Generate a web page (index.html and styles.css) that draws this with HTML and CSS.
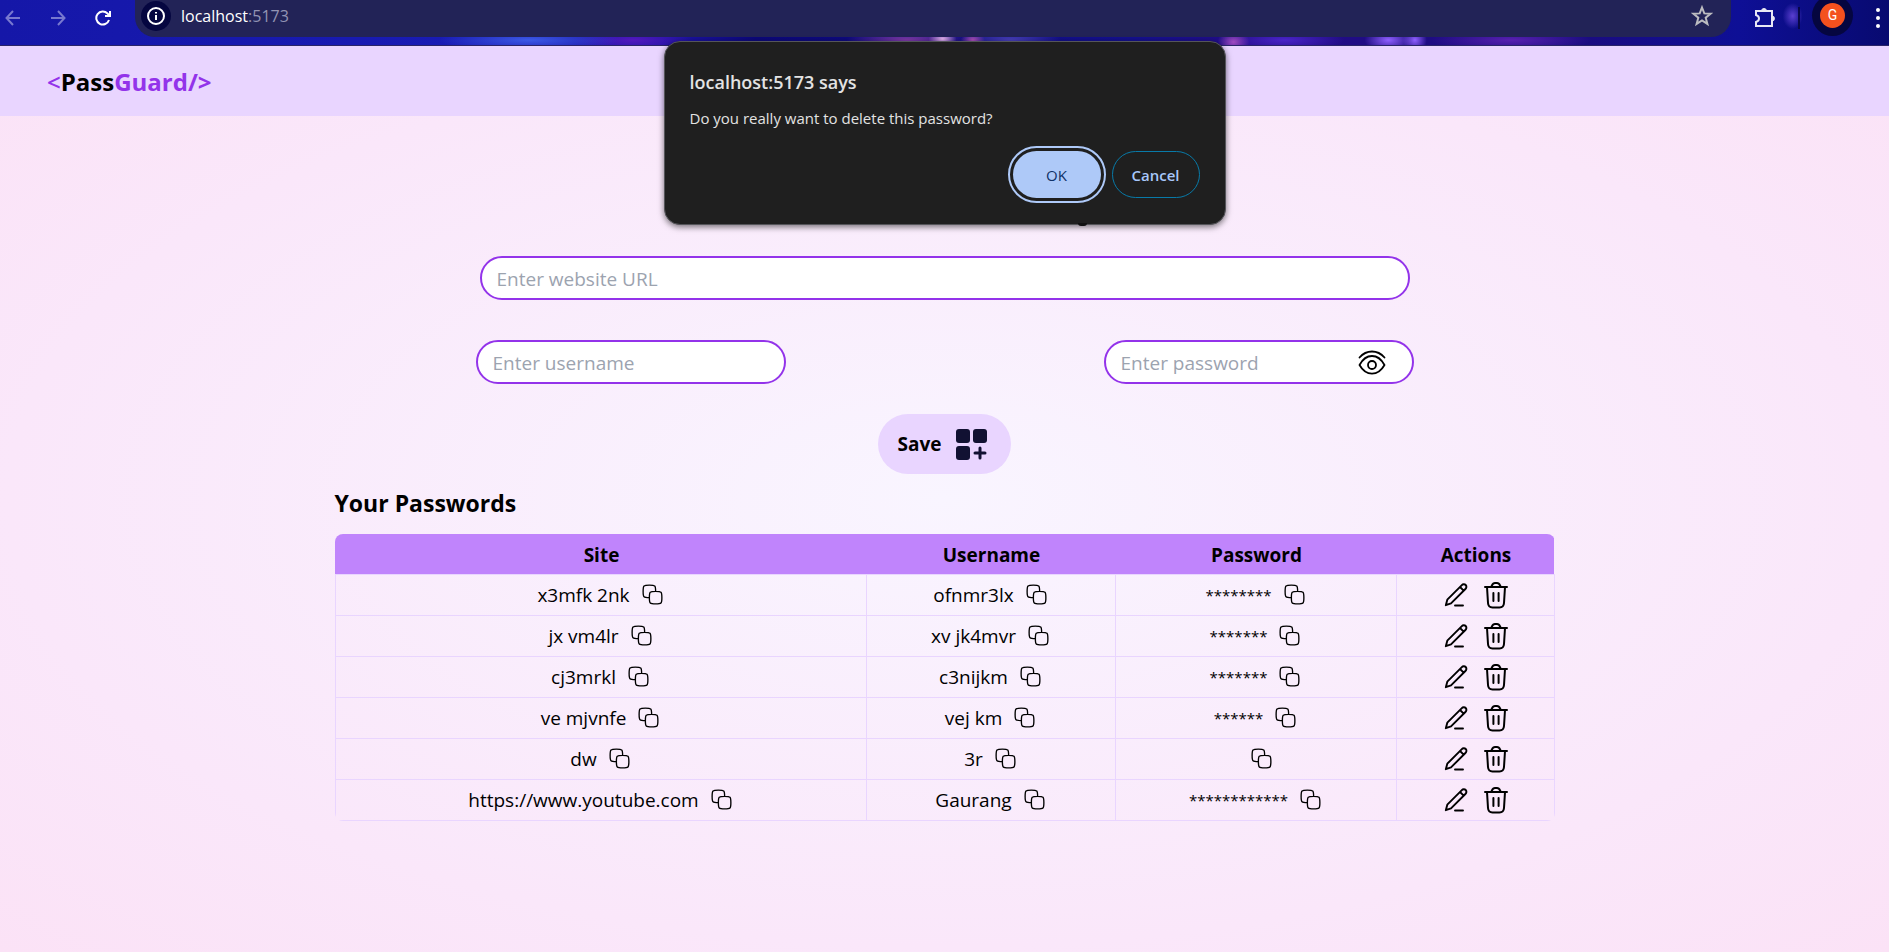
FILE: index.html
```html
<!DOCTYPE html>
<html lang="en">
<head>
<meta charset="utf-8">
<title>PassGuard</title>
<link rel="stylesheet" href="styles.css">
</head>
<body>
<svg class="sprite" aria-hidden="true">
  <symbol id="copy" viewBox="0 0 24 24"><path d="M9 15C6.171 15 4.757 15 3.879 14.121C3 13.243 3 11.828 3 9C3 6.172 3 4.757 3.879 3.879C4.757 3 6.172 3 9 3C11.828 3 13.243 3 14.121 3.879C15 4.757 15 6.172 15 9M9 15C9 12.172 9 10.757 9.879 9.879C10.757 9 12.172 9 15 9M9 15C9 17.828 9 19.243 9.879 20.121C10.757 21 12.172 21 15 21C17.828 21 19.243 21 20.121 20.121C21 19.243 21 17.828 21 15C21 12.172 21 10.757 20.121 9.879C19.243 9 17.828 9 15 9" fill="none" stroke="currentColor" stroke-linecap="round" stroke-linejoin="round"/></symbol>
  <symbol id="edit" viewBox="0 0 26 26"><g fill="none" stroke="currentColor" stroke-width="1.9" stroke-linecap="round" stroke-linejoin="round"><path d="M2.800 23.200L4.300 17.700L18.600 3.300C19.900 2 21.700 2 22.700 3C23.700 4 23.700 5.700 22.400 7L8 21.400ZM17 5L20.700 8.700M12 23.500H20"/></g></symbol>
  <symbol id="trash" viewBox="0 0 26 28"><g fill="none" stroke="currentColor" stroke-width="2" stroke-linecap="round" stroke-linejoin="round"><path d="M2 6H24M4 6L5 22C5.200 25 6.500 26.500 9.500 26.500H16.500C19.500 26.500 20.800 25 21 22L22 6M8 6C9 5.500 9 2 12 2H14C17 2 17 5.500 18 6M10.400 12V20M15.600 12V20"/></g></symbol>
</svg>

<div class="browser-bar">
  <div class="nav-buttons">
    <button class="nav-button dim" aria-label="Back"><svg viewBox="0 0 16 16"><path d="M15 8H2M8 1L1.500 8L8 15"/></svg></button>
    <button class="nav-button dim" aria-label="Forward"><svg viewBox="0 0 16 16"><path d="M1 8H14M8 1L14.500 8L8 15"/></svg></button>
    <button class="nav-button" aria-label="Reload"><svg viewBox="0 0 16 16"><path d="M14 10A6.500 6.500 0 1 1 12.500 3.500L14.500 5.500M15 1V6H10"/></svg></button>
  </div>
  <div class="address">
    <span class="site-info"><svg viewBox="0 0 20 20"><circle cx="10" cy="10" r="8"/><path d="M10 9V14M10 6V7.500"/></svg></span>
    <span class="url">localhost<span class="port">:5173</span></span>
    <button class="star" aria-label="Bookmark"><svg viewBox="0 0 22 22"><path d="M11 2.500L13.300 8.400L19.600 8.700L14.700 12.700L16.400 18.900L11 15.400L5.600 18.900L7.300 12.700L2.400 8.700L8.700 8.400Z"/></svg></button>
  </div>
  <button class="extensions" aria-label="Extensions"><svg viewBox="0 0 22 22"><path d="M2 4H18V19H2V15Q5 14 5 11.500T2 8Z"/><path class="solid" d="M7.500 4A2.500 2.500 0 0 1 12.500 4ZM18 9A2.500 2.500 0 0 1 18 14Z"/></svg></button>
  <span class="divider"></span>
  <button class="profile" aria-label="Profile"><span>G</span></button>
  <button class="more" aria-label="More"><svg viewBox="0 0 6 24"><circle cx="3" cy="4" r="2"/><circle cx="3" cy="12" r="2"/><circle cx="3" cy="20" r="2"/></svg></button>
</div>

<div class="page">
  <header class="navbar"><a class="logo" href="#"><span>&lt;</span>Pass<span>Guard/&gt;</span></a></header>
  <main>
    <form class="entry">
      <input class="field url-field" type="text" aria-label="Website URL" placeholder="Enter website URL">
      <div class="credentials">
        <input class="field" type="text" aria-label="Username" placeholder="Enter username">
        <div class="field password-field">
          <input type="password" aria-label="Password" placeholder="Enter password">
          <button type="button" class="eye" aria-label="Show password"><svg viewBox="0 0 30 28"><g fill="none" stroke="currentColor" stroke-width="1.800" stroke-linecap="round" stroke-linejoin="round"><path d="M2.500 8.500C9.500 0.500 20.500 0.500 27.500 8.500M2.500 16C9 4 21 4 27.500 16C21 27.500 9 27.500 2.500 16Z"/><circle cx="15" cy="16" r="4"/></g></svg></button>
        </div>
      </div>
      <button type="button" class="save">Save
        <svg viewBox="0 0 32 32"><rect x="1" y="1" width="14" height="14" rx="3"/><rect x="18" y="1" width="14" height="14" rx="3"/><rect x="1" y="18" width="14" height="14" rx="3"/><path d="M25 20V30M20 25H30"/></svg>
      </button>
    </form>
    <section class="vault">
      <h2>Your Passwords</h2>
      <table>
        <colgroup><col class="c-site"><col class="c-user"><col class="c-pass"><col></colgroup>
        <thead><tr><th>Site</th><th>Username</th><th>Password</th><th>Actions</th></tr></thead>
        <tbody id="rows"></tbody>
      </table>
    </section>
  </main>
</div>

<div class="dialog" role="dialog" aria-labelledby="dialog-title">
  <h1 id="dialog-title">localhost:5173 says</h1>
  <p>Do you really want to delete this password?</p>
  <div class="dialog-actions"><button class="ok">OK</button><button class="cancel">Cancel</button></div>
</div>
<script src="script.js"></script>
</body>
</html>
```

FILE: styles.css
```css
*, *::before, *::after { box-sizing: border-box; }
body { margin: 0; min-height: 100vh; font: 19px/30px "Open Sans", "Noto Sans", sans-serif; color: #000; display: flex; flex-direction: column; }
button { font: inherit; color: inherit; background: none; border: 0; padding: 0; }
svg { display: block; }
.sprite { position: absolute; width: 0; height: 0; }

.browser-bar {
  height: 46px; padding-bottom: 10px; display: flex; align-items: center; color: #e8e8f4;
  border-bottom: 1px solid #2a2468;
  background:
    radial-gradient(ellipse 90px 12px at 28% 40px, #3c5ae6, transparent),
    radial-gradient(ellipse 60px 12px at 33.500% 40px, #5318bd, transparent),
    radial-gradient(ellipse 14px 8px at 49.900% 39px, #e7b5ef, transparent),
    radial-gradient(ellipse 12px 8px at 51.500% 40px, #b050b8, transparent),
    radial-gradient(ellipse 60px 12px at 48% 40px, #803aa8, transparent),
    radial-gradient(ellipse 50px 12px at 53.500% 40px, #4840b8, transparent),
    radial-gradient(ellipse 16px 12px at 65.300% 42px, #a04ac0, transparent),
    radial-gradient(ellipse 24px 12px at 73.500% 40px, #9060ff, transparent),
    radial-gradient(ellipse 12px 12px at 74.900% 40px, #9060ff, transparent),
    radial-gradient(ellipse 60px 12px at 68% 40px, #4a24c8, transparent),
    radial-gradient(ellipse 80px 12px at 80% 40px, #5820b0, transparent),
    radial-gradient(ellipse 10px 13px at 94.900% 16px, #5a3fd0, transparent),
    linear-gradient(90deg, #1517a8, #191bb4 25%, #1b12a0 36%, #0c0878 40%, #14108c 60%, #230c86 66%, #1a0c80 84%, #0e0f96 92%, #080a70);
}
.nav-buttons { display: flex; gap: 29px; padding-left: 5px; }
.nav-button { width: 16px; height: 16px; color: #fff; }
.nav-button.dim { color: #7879cf; }
.nav-button svg, .site-info svg, .star svg, .extensions svg { width: 100%; fill: none; stroke: currentColor; stroke-width: 2; }
.extensions .solid { fill: currentColor; stroke-width: 1; }
.address { flex: 1; align-self: flex-start; height: 37px; margin-left: 24px; padding: 0 18px 6px 6px; display: flex; align-items: center; background: #222357; border-radius: 0 0 20px 20px; }
.site-info { width: 30px; height: 30px; padding: 5px; border-radius: 50%; background: #050640; color: #fff; }
.url { flex: 1; margin-left: 10px; font-size: 16px; line-height: 20px; color: #fff; }
.port { color: #9293b4; }
.star { width: 22px; height: 22px; color: #bcbcc0; }
.extensions { width: 22px; height: 22px; margin-left: 23px; }
.divider { width: 2px; height: 22px; margin-left: 22px; background: #070748; }
.profile { width: 41px; height: 41px; margin: -4px 0 0 12px; padding: 8px; border-radius: 50%; background: #050640; }
.profile span { display: block; border-radius: 50%; background: #f4511e; color: #fff; font: 14px/25px Roboto, sans-serif; }
.more { width: 6px; height: 24px; margin: 0 8px 0 22px; }
.more svg { width: 100%; fill: #fff; }

.page { flex: 1; background: radial-gradient(ellipse 1336px 640px at 50% 50%, #f9f5ff, #fae7fa 70%, #fbe2f6); }
.navbar { height: 70px; padding: 2px 47px 0; display: flex; align-items: center; background: #e9d5ff; }
.logo { font-size: 24px; font-weight: 700; color: #000; text-decoration: none; }
.logo span { color: #9333ea; }
.logo span:first-child { font-weight: 600; }

.entry { width: 50%; min-width: 600px; margin: 0 auto; padding-top: 140px; display: flex; flex-direction: column; align-items: center; }
.field { width: 310px; height: 44px; padding: 1px 15px 0; border: 2px solid #9333ea; border-radius: 22px; background: #fff; font: inherit; }
input::placeholder { color: #9ca3af; opacity: 1; }
.url-field { width: 930px; max-width: 100%; }
.credentials { width: 938px; max-width: 100%; margin: 40px 0 30px; display: flex; justify-content: space-between; }
.password-field { display: flex; align-items: center; padding-right: 25px; }
.password-field input { flex: 1; min-width: 0; border: 0; padding: 0; font: inherit; background: none; }
.eye { width: 30px; height: 28px; }
.save { height: 60px; padding: 0 24px 0 20px; display: flex; align-items: center; gap: 14px; border-radius: 30px; background: #e9d5ff; font-weight: 700; }
.save svg { width: 32px; fill: #111132; }
.save path { stroke: #111132; stroke-width: 3; stroke-linecap: round; }

.vault { width: 1220px; max-width: 94%; margin: 0 auto; }
h2 { margin: 0; padding: 13px 0 15px; font-size: 23px; line-height: 32px; font-weight: 700; }
table { width: 100%; table-layout: fixed; border-collapse: collapse; border-radius: 8px; overflow: hidden; text-align: center; }
.c-site { width: 531px; }
.c-user { width: 249px; }
.c-pass { width: 281px; }
th { height: 40px; padding: 2px 0 0 2px; background: #c084fc; }
td { height: 41px; padding: 0 0 0 1px; border: 1px solid #e9d5ff; }
.cell { display: flex; align-items: center; justify-content: center; gap: 10px; }
.copy, .copy svg { width: 25px; height: 25px; }
.copy svg { stroke-width: 1.300; }
.actions { gap: 14px; }
.actions svg { width: 26px; height: 28px; }
.stars { font-size: 15px; }

.dialog { position: absolute; top: 41px; left: 50%; width: 562px; margin-left: -281px; padding: 25px; border: 1px solid #55555a; border-radius: 16px; background: #1f1f1f; color: #e3e3e3; box-shadow: 0 2px 6px #0008; }
.dialog::after { content: ""; position: absolute; left: 413px; bottom: -2px; width: 9px; height: 3px; border-radius: 0 0 4px 4px; background: #111; }
.dialog h1 { margin: 0; font-size: 18px; line-height: 30px; font-weight: 600; }
.dialog p { margin: 8px 0 20px; font-size: 15px; line-height: 26px; }
.dialog-actions { display: flex; justify-content: flex-end; gap: 11px; padding-bottom: 1px; font-size: 15px; }
.dialog-actions button { width: 88px; height: 47px; border-radius: 24px; font-weight: 600; }
.ok { background: #aec9f8; color: #103267; outline: 2px solid #aec9f8; outline-offset: 3px; }
.dialog-actions .ok { font-weight: 400; }
.cancel { border: 1px solid #087aa8; color: #a8c7fa; }
```

FILE: script.js
```js
const entries = [
  ["x3mfk 2nk", "ofnmr3lx", 8],
  ["jx vm4lr", "xv jk4mvr", 7],
  ["cj3mrkl", "c3nijkm", 7],
  ["ve mjvnfe", "vej km", 6],
  ["dw", "3r", 0],
  ["https://www.youtube.com", "Gaurang", 12]
];
const icon = name => `<svg><use href="#${name}"/></svg>`;
const cell = (text, cls = "") => `<td><div class="cell"><span class="${cls}">${text}</span><button class="copy" aria-label="Copy">${icon("copy")}</button></div></td>`;
document.getElementById("rows").innerHTML = entries.map(([site, user, n]) =>
  `<tr>${cell(site)}${cell(user)}${cell("*".repeat(n), "stars")}<td><div class="cell actions"><button aria-label="Edit">${icon("edit")}</button><button aria-label="Delete">${icon("trash")}</button></div></td></tr>`
).join("");
```
